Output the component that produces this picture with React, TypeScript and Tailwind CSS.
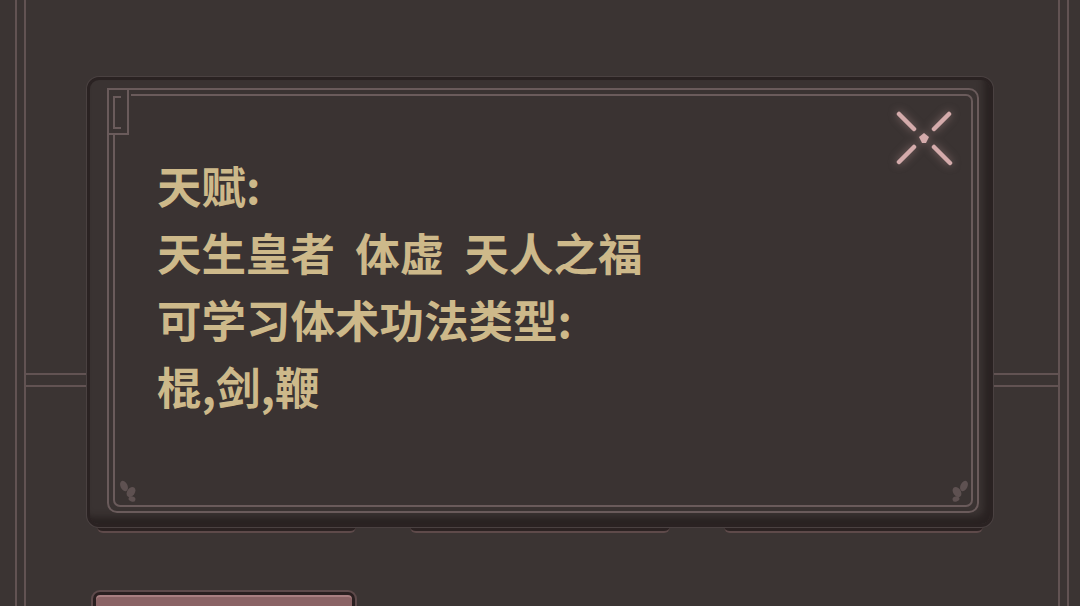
import React from "react";

const LINE = "#6a5b5b";

function CloseMark() {
  return (
    <svg width="64" height="64" viewBox="0 0 64 64" className="drop-shadow-[0_0_4px_rgba(214,170,170,0.5)]">
      <g stroke="#d4abab" strokeWidth="4.5" strokeLinecap="round">
        <path d="M7 8 L22 23" />
        <path d="M57 8 L42 23" />
        <path d="M22 41 L7 56" />
        <path d="M42 41 L58 57" />
      </g>
      <path d="M32 27 L37 31 L34 37 L30 37 L27 31 Z" fill="#d4abab" />
    </svg>
  );
}

function CornerKnot() {
  return (
    <svg width="24" height="48" viewBox="0 0 24 48">
      <rect x="2" y="2" width="22" height="44" fill="#3a3332" />
      <g stroke={LINE} strokeWidth="2" fill="none">
        <path d="M1 0 V48" />
        <path d="M0 1 H24" />
        <path d="M21 1 V46" />
        <path d="M1 46 H22" />
        <path d="M14 9 H7 V40 H14" />
      </g>
    </svg>
  );
}

function Sprig({ flip }: { flip?: boolean }) {
  return (
    <svg width="20" height="24" viewBox="0 0 20 24" className={flip ? "-scale-x-100" : ""}>
      <g fill="#5e5151">
        <ellipse cx="5" cy="7" rx="3.5" ry="5.5" transform="rotate(-25 5 7)" />
        <ellipse cx="12" cy="13" rx="3.8" ry="5.5" transform="rotate(35 12 13)" />
        <ellipse cx="13" cy="20" rx="3.5" ry="2.6" transform="rotate(15 13 20)" />
      </g>
    </svg>
  );
}

function BackCard() {
  return (
    <div className="h-[133px] rounded-b-[6px] border-b-2 border-[#5e4a4a] bg-[#2b2222]" />
  );
}

export default function App() {
  return (
    <div
      className="relative flex h-[606px] w-[1080px] overflow-hidden bg-[#3b3433]"
      style={{ fontFamily: '"Noto Sans CJK SC", "Noto Sans", sans-serif' }}
    >
      {/* left rail */}
      <div className="ml-[15px] h-full w-[11px] shrink-0 border-x-2 border-[#625353]" />

      <div className="flex flex-1 flex-col">
        <div className="mt-[373px] h-[14px] shrink-0 border-y-2 border-[#625353]" />

        <div className="mt-[13px] grid shrink-0 grid-cols-3 gap-[54px] pl-[71px] pr-[75px]">
          <BackCard />
          <BackCard />
          <BackCard />
        </div>

        <div className="mt-[59px] shrink-0 pl-[67px]">
          <div className="h-[40px] w-[262px] rounded-[7px] border-[3px] border-[#2a1f20] bg-[#8a6365] shadow-[0_0_0_2px_#5e4a4b,inset_0_2px_0_#a97f81]" />
        </div>
      </div>

      {/* right rail */}
      <div className="mr-[11px] h-full w-[11px] shrink-0 border-x-2 border-[#625353]" />

      {/* talent dialog */}
      <div className="absolute left-[87px] top-[77px] flex h-[450px] w-[906px] flex-col rounded-[12px] border-[3px] border-[#2a2222] bg-[#3a3332] pb-[11px] pl-[17px] pr-[11px] pt-[8px] shadow-[0_0_0_1px_#4a4141,inset_-6px_-7px_6px_rgba(28,20,20,0.55)]">
        <div className="relative flex flex-1 flex-col rounded-[10px] border-2 border-[#6a5b5b] p-[4px]">
          <div className="relative flex-1 rounded-[7px] border-2 border-[#6a5b5b] pl-[42px] pt-[55px] text-[44.5px] font-bold leading-[67px] text-[#cdb98a]">
            <div>天赋:</div>
            <div className="whitespace-pre">天生皇者  体虚  天人之福</div>
            <div>可学习体术功法类型:</div>
            <div>棍,剑,鞭</div>

            <div className="absolute bottom-[2px] left-[4px]">
              <Sprig />
            </div>
            <div className="absolute bottom-[2px] right-[2px]">
              <Sprig flip />
            </div>
          </div>

          <div className="absolute -left-[2px] -top-[2px]">
            <CornerKnot />
          </div>
        </div>

        <div className="absolute left-[802px] top-[26px]">
          <CloseMark />
        </div>
      </div>
    </div>
  );
}
